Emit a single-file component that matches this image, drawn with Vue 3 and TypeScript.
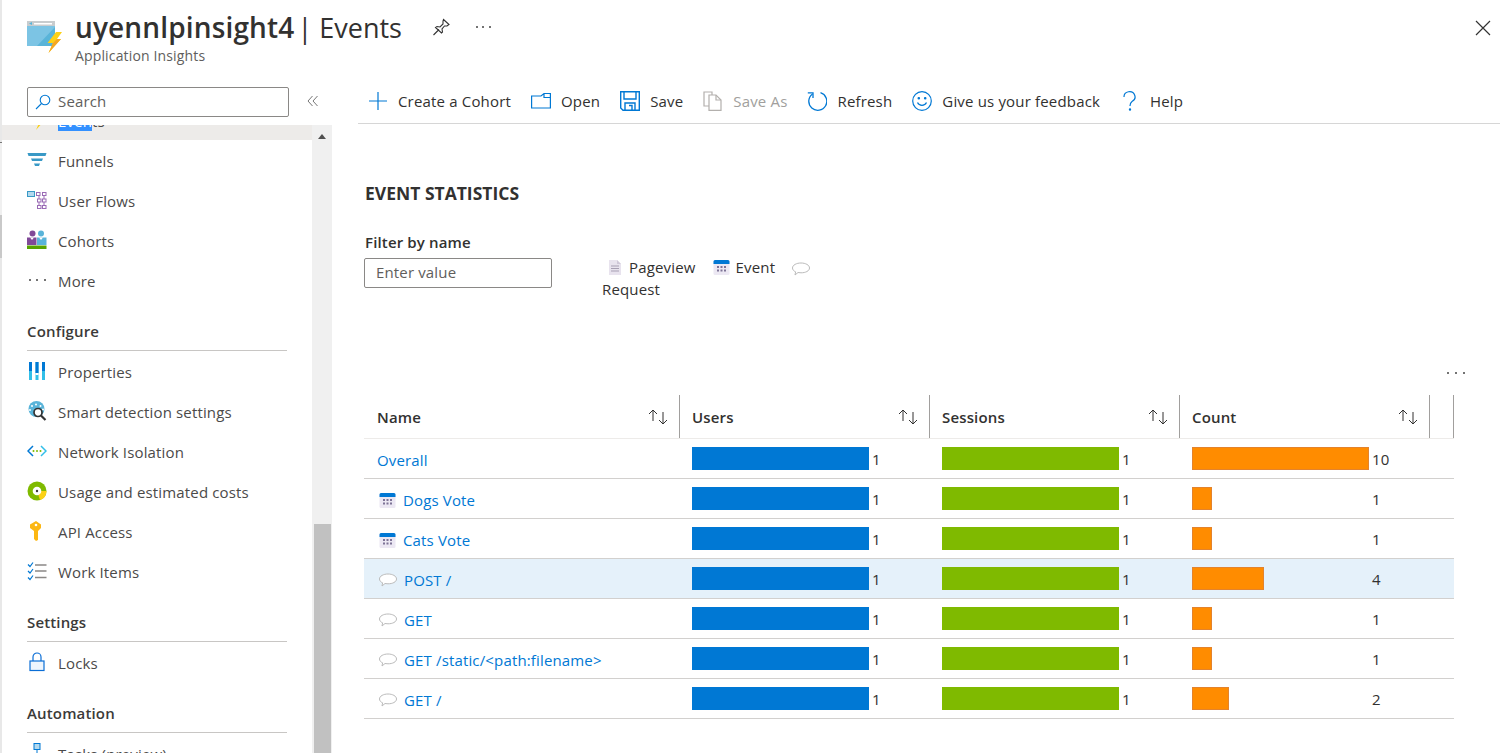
<script setup lang="ts">
interface Row {
  name: string
  kind: 'none' | 'event' | 'request'
  users: number
  sessions: number
  count: number
  selected?: boolean
}

const rows: Row[] = [
  { name: 'Overall', kind: 'none', users: 1, sessions: 1, count: 10 },
  { name: 'Dogs Vote', kind: 'event', users: 1, sessions: 1, count: 1 },
  { name: 'Cats Vote', kind: 'event', users: 1, sessions: 1, count: 1 },
  { name: 'POST /', kind: 'request', users: 1, sessions: 1, count: 4, selected: true },
  { name: 'GET', kind: 'request', users: 1, sessions: 1, count: 1 },
  { name: 'GET /static/<path:filename>', kind: 'request', users: 1, sessions: 1, count: 1 },
  { name: 'GET /', kind: 'request', users: 1, sessions: 1, count: 2 },
]

const columns = ['Name', 'Users', 'Sessions', 'Count']

function countWidth(count: number) {
  return 2.5 + 17.45 * count + 'px'
}
</script>

<template>
  <div class="page">
    <div class="edge"></div>
    <div class="blade">
      <header class="head">
        <svg class="logo" width="38" height="36" viewBox="0 0 38 36">
          <rect x="0" y="2" width="28" height="25" fill="#7cc4e4" />
          <path d="M10 27 L28 8 V27 Z" fill="#59b4d9" />
          <rect x="0" y="2" width="28" height="5" fill="#c8ccce" />
          <rect x="7" y="4" width="18" height="1.5" fill="#fff" />
          <path d="M2 4.5 L5 3 V6 Z" fill="#59b4d9" />
          <path d="M29 13 H35 L30 20 H34 L21.5 34 L26 24 H20.5 Z" fill="#fcd116" />
          <path d="M30 20 H34 L21.5 34 L26 24 Z" fill="#f5a623" />
        </svg>
        <div class="head-text">
          <div class="title-row">
            <h1 class="title"><span class="res">uyennlpinsight4</span><span class="sep"> | Events</span></h1>
            <svg class="pin" width="20" height="20" viewBox="0 0 20 20" fill="none" stroke="#333" stroke-width="1.1">
              <path d="M1.5 18 L7 12.5 M11.5 2.5 L17 7.5 L15 9 L12.5 9 L10 12 L10.5 15 L9.5 16 L3.5 10.5 L5 9.5 L8 10 L11 7 L11 4 Z" />
            </svg>
            <span class="dots head-dots"><i></i><i></i><i></i></span>
          </div>
          <div class="subtitle">Application Insights</div>
        </div>
        <svg class="close" width="16" height="16" viewBox="0 0 16 16" stroke="#333" stroke-width="1.2">
          <path d="M1 1 L15 15 M15 1 L1 15" />
        </svg>
      </header>

      <div class="body">
        <aside class="side">
          <div class="search-row">
            <div class="search">
              <svg width="16" height="16" viewBox="0 0 16 16" fill="none" stroke="#0078d4" stroke-width="1.1">
                <circle cx="10" cy="6" r="4.8" />
                <path d="M6.5 9.5 L1 15" />
              </svg>
              <span>Search</span>
            </div>
            <svg class="collapse" width="12" height="12" viewBox="0 0 12 12" fill="none" stroke="#777" stroke-width="1">
              <path d="M5.5 1 L1 6 L5.5 11 M10.5 1 L6 6 L10.5 11" />
            </svg>
          </div>

          <div class="scroller">
            <nav class="nav">
              <div class="item current">
                <svg class="nav-icon" width="20" height="20" viewBox="0 0 20 20">
                  <path d="M0 2 H20 V12 H0 Z" fill="#7cc4e4" />
                  <path d="M12 4 H18 L14 11 H17 L9 20 L12 13 H9 Z" fill="#fcd116" />
                </svg>
                <span class="label"><span class="picked">Even</span>ts</span>
              </div>
              <div class="item">
                <svg class="nav-icon" width="20" height="20" viewBox="0 0 20 20" fill="#3999c6">
                  <path d="M0.5 3 H19.5 L18.5 6 H1.5 Z" />
                  <path d="M4 8.5 H16 L15 11 H5 Z" />
                  <path d="M7 13.5 H13 L12 16 H8 Z" />
                </svg>
                <span class="label">Funnels</span>
              </div>
              <div class="item">
                <svg class="nav-icon" width="20" height="20" viewBox="0 0 20 20" fill="none">
                  <rect x="0.5" y="1.5" width="7" height="5" fill="#b3d9ee" stroke="#3999c6" />
                  <g stroke="#9a6bb5">
                    <rect x="9.5" y="2.5" width="3.5" height="3" />
                    <rect x="15.5" y="2.5" width="3.5" height="3" />
                    <rect x="10.5" y="9" width="3.5" height="3" />
                    <rect x="15.5" y="9" width="3.5" height="3" />
                    <rect x="10.5" y="15.5" width="3.5" height="3" />
                    <rect x="15.5" y="15.5" width="3.5" height="3" />
                    <path d="M12 5.5 V9 M17 5.5 V9 M12 12 V15.5 M17 12 V15.5" />
                  </g>
                </svg>
                <span class="label">User Flows</span>
              </div>
              <div class="item">
                <svg class="nav-icon" width="20" height="20" viewBox="0 0 20 20">
                  <circle cx="5.5" cy="3.5" r="3" fill="#804998" />
                  <circle cx="14" cy="3.5" r="3" fill="#59b4d9" />
                  <path d="M0 7.5 H9.5 V15 H0 Z" fill="#804998" />
                  <path d="M10 7.5 H19.5 V15 H10 Z" fill="#59b4d9" />
                  <path d="M3 7.5 L5 10 L7 7.5 Z M12 7.5 L14 10 L16 7.5 Z" fill="#fff" />
                  <rect x="0" y="15.5" width="19.5" height="3.5" fill="#57a300" />
                </svg>
                <span class="label">Cohorts</span>
              </div>
              <div class="item">
                <span class="nav-icon dots more-dots"><i></i><i></i><i></i></span>
                <span class="label">More</span>
              </div>

              <div class="group">Configure</div>
              <div class="item">
                <svg class="nav-icon" width="20" height="20" viewBox="0 0 20 20">
                  <g fill="#32bfe8">
                    <rect x="2" y="1" width="3" height="18" />
                    <rect x="8.5" y="1" width="3" height="18" />
                    <rect x="15" y="1" width="3" height="18" />
                  </g>
                  <g fill="#0078d4">
                    <rect x="2" y="1" width="3" height="9" />
                    <rect x="8.5" y="1" width="3" height="11" />
                    <rect x="15" y="1" width="3" height="9" />
                  </g>
                  <rect x="8.5" y="12" width="3" height="2" fill="#fff" />
                </svg>
                <span class="label">Properties</span>
              </div>
              <div class="item">
                <svg class="nav-icon" width="20" height="20" viewBox="0 0 20 20">
                  <circle cx="9.5" cy="8" r="8" fill="#59b4d9" />
                  <g fill="#fff">
                    <circle cx="5" cy="5" r="1" /><circle cx="9" cy="3.5" r="1" /><circle cx="13.5" cy="5" r="1" />
                    <circle cx="3" cy="9" r="1" /><circle cx="16" cy="8.5" r="1" />
                  </g>
                  <circle cx="11" cy="11.5" r="4" fill="#fff" stroke="#333" stroke-width="1.7" />
                  <path d="M14 14.5 L18.5 19" stroke="#333" stroke-width="2.2" />
                </svg>
                <span class="label">Smart detection settings</span>
              </div>
              <div class="item">
                <svg class="nav-icon" width="20" height="20" viewBox="0 0 20 20" fill="none">
                  <path d="M6 5 L1 10 L6 15" stroke="#0078d4" stroke-width="1.5" />
                  <path d="M14 5 L19 10 L14 15" stroke="#32bfe8" stroke-width="1.5" />
                  <g fill="#7fba00"><circle cx="6.5" cy="10" r="1" /><circle cx="10" cy="10" r="1" /><circle cx="13.5" cy="10" r="1" /></g>
                </svg>
                <span class="label">Network Isolation</span>
              </div>
              <div class="item">
                <svg class="nav-icon" width="20" height="20" viewBox="0 0 20 20">
                  <circle cx="10" cy="10" r="9.5" fill="#7fba00" />
                  <path d="M10 10 L19.5 10 A9.5 9.5 0 0 1 13 19 Z" fill="#fcd116" />
                  <circle cx="10" cy="10" r="4.3" fill="#fff" />
                  <circle cx="10" cy="10" r="1.2" fill="#3b3b3b" />
                </svg>
                <span class="label">Usage and estimated costs</span>
              </div>
              <div class="item">
                <svg class="nav-icon" width="20" height="20" viewBox="0 0 20 20">
                  <path d="M9 0 L14 3.5 V7 L11 10 V19 L9 20 L7 18 V10 L3 7 V3.5 Z" fill="#fcb714" />
                  <circle cx="9" cy="4" r="1.3" fill="#fff" />
                </svg>
                <span class="label">API Access</span>
              </div>
              <div class="item">
                <svg class="nav-icon" width="20" height="20" viewBox="0 0 20 20" fill="none">
                  <path d="M1 3.5 L3 5.5 L6 1.5 M1 10 L3 12 L6 8 M1 16.5 L3 18.5 L6 14.5" stroke="#0078d4" stroke-width="1.2" />
                  <path d="M8 4 H19.5 M8 10 H19.5 M8 16.5 H19.5" stroke="#8a8886" stroke-width="1.5" />
                </svg>
                <span class="label">Work Items</span>
              </div>

              <div class="group">Settings</div>
              <div class="item">
                <svg class="nav-icon" width="20" height="20" viewBox="0 0 20 20" fill="none" stroke="#0b6ed6" stroke-width="1.2">
                  <rect x="3" y="9" width="14" height="9.5" fill="#eef5fd" />
                  <path d="M6 9 V5 A4 4 0 0 1 14 5 V9" />
                </svg>
                <span class="label">Locks</span>
              </div>

              <div class="group">Automation</div>
              <div class="item">
                <svg class="nav-icon" width="20" height="20" viewBox="0 0 20 20" fill="none" stroke="#0078d4">
                  <rect x="7" y="0.5" width="6" height="6" fill="#b3d9ee" />
                  <path d="M10 6.5 V14" />
                </svg>
                <span class="label">Tasks (preview)</span>
              </div>
            </nav>
            <div class="scrollbar">
              <span class="arrow"></span>
              <span class="thumb"></span>
            </div>
          </div>
        </aside>

        <main class="main">
          <div class="toolbar">
            <div class="tool">
              <svg width="20" height="20" viewBox="0 0 20 20" stroke="#0078d4" stroke-width="1.2"><path d="M10 1 V19 M1 10 H19" /></svg>
              <span>Create a Cohort</span>
            </div>
            <div class="tool">
              <svg width="20" height="20" viewBox="0 0 20 20" fill="none" stroke="#0078d4" stroke-width="1.2"><path d="M0.6 5 H10 L13 2.5 H19.4 V17 H0.6 Z M13 2.5 V6.5 H19.4" /></svg>
              <span>Open</span>
            </div>
            <div class="tool">
              <svg width="20" height="20" viewBox="0 0 20 20" fill="none" stroke="#0078d4" stroke-width="1.4"><path d="M0.7 0.7 H19.3 V19.3 H3 L0.7 17 Z" /><path d="M4 1 V8 H16 V1" /><path d="M5 19 V12 H15 V19 M9 14.5 H12 V19" /></svg>
              <span>Save</span>
            </div>
            <div class="tool off">
              <svg width="20" height="20" viewBox="0 0 20 20" fill="none" stroke="#b3b0ad" stroke-width="1.2"><path d="M1 1 H9 V15 H1 Z" fill="#fff" /><path d="M6 4 H13 L18 9 V19.4 H6 Z" fill="#fff" /><path d="M13 4 V9 H18" /></svg>
              <span>Save As</span>
            </div>
            <div class="tool">
              <svg width="20" height="20" viewBox="0 0 20 20" fill="none" stroke="#0078d4" stroke-width="1.3"><path d="M5.5 3 A9 9 0 1 0 13.5 1.7" /><path d="M0.8 1.8 H6 V7" /></svg>
              <span>Refresh</span>
            </div>
            <div class="tool">
              <svg width="20" height="20" viewBox="0 0 20 20" fill="none" stroke="#0078d4" stroke-width="1.2"><circle cx="10" cy="10" r="9.3" /><path d="M5.5 11.5 A5 5 0 0 0 14.5 11.5" /><circle cx="6.8" cy="7.3" r="0.7" fill="#0078d4" /><circle cx="13.2" cy="7.3" r="0.7" fill="#0078d4" /></svg>
              <span>Give us your feedback</span>
            </div>
            <div class="tool">
              <svg width="20" height="20" viewBox="0 0 20 20" fill="none" stroke="#0078d4" stroke-width="1.2"><path d="M4 6 A5.5 5.2 0 1 1 12 10.5 C10.5 11.6 10 12.5 10 15" /><circle cx="10" cy="18.5" r="0.6" fill="#0078d4" /></svg>
              <span>Help</span>
            </div>
          </div>

          <section class="content">
            <h2 class="stats-title">EVENT STATISTICS</h2>
            <div class="filters">
              <div class="filter">
                <label class="filter-label">Filter by name</label>
                <div class="value-box">Enter value</div>
              </div>
              <div class="legend">
                <span class="legend-item">
                  <svg width="17" height="17" viewBox="0 0 17 17"><path d="M3 1 H11 L15 5 V16 H3 Z" fill="#e8e3ee" /><path d="M11 1 L15 5 H11 Z" fill="#cfc8d8" /><path d="M5 7 H13 M5 9.5 H13 M5 12 H13" stroke="#a79fb3" /></svg>
                  Pageview
                </span>
                <span class="legend-item">
                  <svg width="17" height="17" viewBox="0 0 17 17"><rect x="0.5" y="1" width="16" height="15" rx="1.5" fill="#ece8f3" /><path d="M0.5 5 V2.5 A1.5 1.5 0 0 1 2 1 H15 A1.5 1.5 0 0 1 16.5 2.5 V5 Z" fill="#0078d4" /><g fill="#7d7396"><rect x="4" y="7" width="2" height="2" /><rect x="7.5" y="7" width="2" height="2" /><rect x="11" y="7" width="2" height="2" /><rect x="4" y="10.5" width="2" height="2" /><rect x="7.5" y="10.5" width="2" height="2" /><rect x="11" y="10.5" width="2" height="2" /></g></svg>
                  Event
                </span>
                <span class="legend-item bubble-only">
                  <svg width="18" height="14" viewBox="0 0 18 14" fill="#fff" stroke="#bbb"><path d="M9 1 C13.5 1 17.5 3 17.5 6 C17.5 9 13.5 10.8 9 10.8 C8 10.8 7 10.7 6 10.5 L3 13 L3.6 9.8 C1.6 9 0.5 7.6 0.5 6 C0.5 3 4.5 1 9 1 Z" /></svg>
                </span>
                <span class="legend-item">Request</span>
              </div>
            </div>

            <div class="table-tools"><span class="dots wide"><i></i><i></i><i></i></span></div>

            <div class="table">
              <div class="tr th">
                <div v-for="col in columns" :key="col" class="cell head-cell">
                  <span>{{ col }}</span>
                  <svg class="sort" width="22" height="16" viewBox="0 0 22 16" fill="none" stroke="#323130"><path d="M6 12 V1 M2 5 L6 1 L10 5" /><path d="M16 3 V15 M12 11 L16 15 L20 11" /></svg>
                </div>
                <div class="cell head-cell last"></div>
              </div>
              <div v-for="row in rows" :key="row.name" class="tr" :class="{ selected: row.selected }">
                <div class="cell name">
                  <svg v-if="row.kind === 'event'" width="17" height="17" viewBox="0 0 17 17"><rect x="0.5" y="1" width="16" height="15" rx="1.5" fill="#ece8f3" /><path d="M0.5 5 V2.5 A1.5 1.5 0 0 1 2 1 H15 A1.5 1.5 0 0 1 16.5 2.5 V5 Z" fill="#0078d4" /><g fill="#7d7396"><rect x="4" y="7" width="2" height="2" /><rect x="7.5" y="7" width="2" height="2" /><rect x="11" y="7" width="2" height="2" /><rect x="4" y="10.5" width="2" height="2" /><rect x="7.5" y="10.5" width="2" height="2" /><rect x="11" y="10.5" width="2" height="2" /></g></svg>
                  <svg v-else-if="row.kind === 'request'" width="18" height="14" viewBox="0 0 18 14" fill="#fff" stroke="#bbb"><path d="M9 1 C13.5 1 17.5 3 17.5 6 C17.5 9 13.5 10.8 9 10.8 C8 10.8 7 10.7 6 10.5 L3 13 L3.6 9.8 C1.6 9 0.5 7.6 0.5 6 C0.5 3 4.5 1 9 1 Z" /></svg>
                  <span class="link">{{ row.name }}</span>
                </div>
                <div class="cell metric">
                  <span class="bar blue"></span><span class="num">{{ row.users }}</span>
                </div>
                <div class="cell metric">
                  <span class="bar green"></span><span class="num">{{ row.sessions }}</span>
                </div>
                <div class="cell metric">
                  <span class="track"><span class="bar orange" :style="{ width: countWidth(row.count) }"></span></span><span class="num">{{ row.count }}</span>
                </div>
                <div class="cell"></div>
              </div>
            </div>
          </section>
        </main>
      </div>
    </div>
  </div>
</template>

<style>
html, body {
  margin: 0;
  background: #fff;
}
</style>

<style scoped>
.page {
  width: 1500px;
  height: 753px;
  display: flex;
  overflow: hidden;
  font-family: "Open Sans", "Noto Sans", sans-serif;
  font-size: 15px;
  letter-spacing: 0.15px;
  color: #323130;
}
.edge {
  width: 2px;
  flex: none;
  background: linear-gradient(#e8e8e8 142px, #777 142px, #777 143px, #f0f0f0 143px, #f0f0f0 215px, #c9c9c9 215px, #c9c9c9 258px, #e8e8e8 258px);
}
.blade {
  flex: 1;
  display: flex;
  flex-direction: column;
  min-width: 0;
}
.head {
  height: 80px;
  flex: none;
  display: flex;
  position: relative;
  box-sizing: border-box;
  padding: 8px 0 0 25px;
}
.logo {
  margin-top: 11px;
  flex: none;
}
.head-text {
  margin-left: 10px;
}
.title-row {
  display: flex;
  align-items: center;
  height: 38px;
}
.title {
  margin: 0;
  font-size: 27px;
  font-weight: 400;
  line-height: 38px;
  white-space: pre;
  letter-spacing: 0;
}
.res {
  font-size: 28px;
  font-weight: 600;
  letter-spacing: 0.15px;
}
.sep {
  margin-left: -4px;
}
.pin {
  margin-left: 30px;
}
.head-dots {
  margin-left: 24px;
}
.subtitle {
  font-size: 14px;
  color: #605e5c;
  line-height: 20px;
}
.close {
  position: absolute;
  right: 9px;
  top: 20px;
}
.dots {
  display: inline-flex;
  align-items: center;
  justify-content: space-between;
  width: 15px;
}
.dots.wide {
  width: 18px;
}
.dots i {
  width: 2px;
  height: 2px;
  border-radius: 50%;
  background: #444;
}
.body {
  flex: 1;
  display: flex;
  min-height: 0;
}
.side {
  width: 330px;
  flex: none;
  display: flex;
  flex-direction: column;
}
.search-row {
  height: 45px;
  flex: none;
  display: flex;
  box-sizing: border-box;
  padding: 7px 0 0 25px;
  align-items: flex-start;
}
.search {
  width: 262px;
  height: 30px;
  box-sizing: border-box;
  border: 1px solid #8a8886;
  border-radius: 2px;
  display: flex;
  align-items: center;
  gap: 7px;
  padding-left: 7px;
  color: #605e5c;
}
.search span {
  padding-bottom: 2px;
}
.collapse {
  margin: 8px 0 0 18px;
}
.scroller {
  flex: 1;
  display: flex;
  min-height: 0;
  overflow: hidden;
}
.nav {
  width: 310px;
  flex: none;
  margin-top: -25px;
}
.item {
  height: 40px;
  display: flex;
  align-items: center;
  padding-left: 25px;
  color: #4b4a49;
}
.item.current {
  background: #edebe9;
}
.nav-icon {
  width: 20px;
  flex: none;
}
.more-dots {
  box-sizing: border-box;
  padding: 0 1.5px;
}
.label {
  margin-left: 11px;
  padding-top: 2px;
}
.picked {
  background: #3390ff;
  color: #fff;
}
.group {
  height: 30px;
  margin: 20px 25px 0 25px;
  line-height: 22px;
  font-weight: 600;
  color: #3b3a39;
  border-bottom: 1px solid #c8c6c4;
}
.scrollbar {
  width: 20px;
  flex: none;
  background: #f0f0f0;
  position: relative;
}
.arrow {
  position: absolute;
  left: 6px;
  top: 9px;
  border-left: 4px solid transparent;
  border-right: 4px solid transparent;
  border-bottom: 5px solid #505050;
}
.thumb {
  position: absolute;
  left: 2px;
  width: 17px;
  top: 399px;
  bottom: 0;
  background: #c1c1c1;
}
.main {
  flex: 1;
  min-width: 0;
  padding-left: 26px;
}
.toolbar {
  height: 44px;
  box-sizing: border-box;
  border-bottom: 1px solid #d6d6d6;
  display: flex;
  align-items: center;
  gap: 20px;
  padding: 0 0 2px 10px;
}
.tool {
  display: flex;
  align-items: center;
  gap: 10px;
  white-space: nowrap;
  letter-spacing: 0.17px;
}
.tool span {
  padding-top: 1px;
}
.tool.off {
  color: #a19f9d;
}
.content {
  padding-left: 6px;
}
.stats-title {
  margin: 56px 0 0 1px;
  font-size: 17.5px;
  letter-spacing: 0;
  line-height: 26px;
  font-weight: 700;
}
.filters {
  display: flex;
  margin-top: 26px;
}
.filter {
  width: 188px;
  flex: none;
}
.filter-label {
  display: block;
  font-weight: 600;
  line-height: 20px;
  padding-left: 1px;
}
.value-box {
  margin-top: 6px;
  height: 30px;
  box-sizing: border-box;
  border: 1px solid #8a8886;
  border-radius: 2px;
  padding-left: 11px;
  line-height: 27px;
  color: #605e5c;
}
.legend {
  width: 215px;
  margin: 24px 0 0 50px;
  line-height: 22px;
}
.legend-item {
  margin-right: 9px;
}
.legend-item svg {
  vertical-align: -3px;
  margin: 0 2px 0 4px;
}
.bubble-only {
  margin-right: 0;
}
.table-tools {
  height: 20px;
  margin-top: 63px;
  width: 1101px;
  display: flex;
  justify-content: flex-end;
  align-items: center;
}
.table {
  margin-top: 12px;
  width: 1090px;
}
.tr {
  display: grid;
  grid-template-columns: 316px 250px 250px 250px 24px;
  height: 40px;
  border-bottom: 1px solid #d2d0ce;
  box-sizing: border-box;
}
.tr.th {
  height: 44px;
  border-bottom-color: #edebe9;
}
.tr.selected {
  background: #e5f1fa;
}
.cell {
  display: flex;
  align-items: center;
  padding-left: 12px;
  min-width: 0;
}
.head-cell {
  font-weight: 600;
  justify-content: space-between;
  padding-right: 10px;
  border-right: 1px solid #a19f9d;
  box-sizing: border-box;
}
.head-cell:first-child {
  padding-left: 13px;
}
.head-cell.last {
  padding: 0;
}
.name {
  padding-left: 13px;
  gap: 7px;
}
.name svg {
  flex: none;
  margin: 3px 0 0 2px;
}
.link {
  color: #0078d4;
  white-space: nowrap;
  padding-top: 2px;
}
.bar {
  display: block;
  height: 23px;
  width: 177px;
  box-sizing: border-box;
  flex: none;
}
.blue {
  background: #0078d4;
}
.green {
  background: #7fba00;
}
.orange {
  background: #ff8c00;
  border: 1px solid #e3832d;
}
.track {
  width: 177px;
  flex: none;
}
.num {
  margin-left: 3px;
  color: #323130;
}
</style>
